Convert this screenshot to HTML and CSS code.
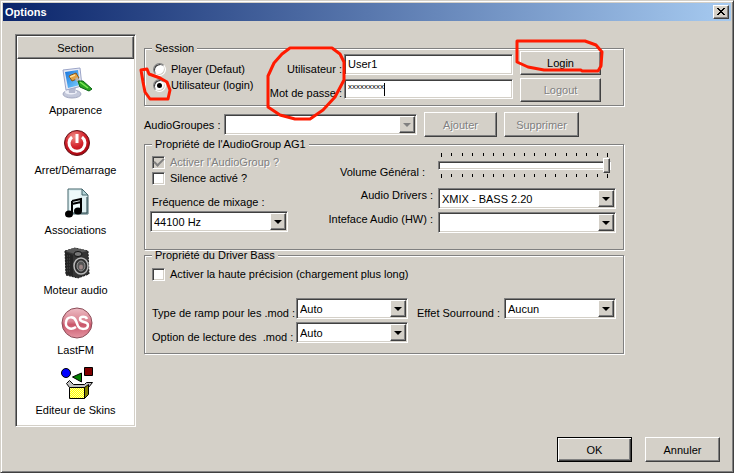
FILE: index.html
```html
<!DOCTYPE html>
<html lang="fr">
<head>
<meta charset="utf-8">
<title>Options</title>
<link rel="stylesheet" href="styles.css">
</head>
<body>
<div class="window">
  <header class="titlebar">
    <h1>Options</h1>
    <button class="close" type="button" aria-label="Fermer">
      <svg width="8" height="7" viewBox="0 0 8 7" shape-rendering="crispEdges"><path d="M0 0h2v1h1v1h2V1h1V0h2v1H7v1H6v1H5v1h1v1h1v1h1v1H6V6H5V5H3v1H2v1H0V6h1V5h1V4h1V3H2V2H1V1H0z"/></svg>
    </button>
  </header>

  <div class="content">
    <nav class="sidebar">
      <h2>Section</h2>
      <ul>
        <li><a href="#">
          <svg width="32" height="32" viewBox="0 0 32 32">
            <defs><linearGradient id="scr" x1="0" y1="0" x2="1" y2="1"><stop offset="0" stop-color="#1673dc"/><stop offset="1" stop-color="#7fd3ff"/></linearGradient></defs>
            <ellipse cx="11" cy="27" rx="9" ry="4" fill="#c3c8da" stroke="#a2a8c0"/>
            <ellipse cx="10" cy="25" rx="6" ry="2.500" fill="#eef0f8"/>
            <path d="M7 18l8 2-1 6H8z" fill="#b4b9ce"/>
            <path d="M2 3L19 1l2 18-16 4z" fill="#e6e9f4" stroke="#9ca5c8"/>
            <path d="M4 5l13-2 2 15-12 3z" fill="url(#scr)"/>
            <path d="M8 9l7-3 3 5-7 3z" fill="#e2a244" stroke="#8d5716"/><path d="M9 10l5-2" stroke="#ffe098" stroke-width="1.500"/>
            <path d="M15 11l4 5" stroke="#b4b4b4" stroke-width="3"/>
            <path d="M17 14l5 0 9 8-3 2-9-4z" fill="#28a321" stroke="#096513"/>
            <path d="M19 15l8 6" stroke="#7eea57" stroke-width="1.500"/>
          </svg>
          <span>Apparence</span></a></li>
        <li><a href="#">
          <svg width="32" height="32" viewBox="0 0 32 32">
            <defs><radialGradient id="pow" cx=".4" cy=".25" r=".8"><stop offset="0" stop-color="#f08c86"/><stop offset=".5" stop-color="#d3232c"/><stop offset="1" stop-color="#a3000b"/></radialGradient></defs>
            <circle cx="16" cy="16" r="12.500" fill="url(#pow)" stroke="#631016"/>
            <path d="M11 10a8 8 0 1 0 10 0" fill="none" stroke="#fff" stroke-width="3"/>
            <path d="M16 7v9" stroke="#fff" stroke-width="3"/>
          </svg>
          <span>Arret/Démarrage</span></a></li>
        <li><a href="#">
          <svg width="32" height="32" viewBox="0 0 32 32">
            <path d="M7 2h14l6 6v19H7z" fill="#dff0f2" stroke="#42656b"/>
            <path d="M9 4h10v21H9z" fill="#eefafa"/>
            <path d="M21 2v6h6z" fill="#b4d4d8" stroke="#42656b"/>
            <path d="M26 10v16H8" fill="none" stroke="#234047"/>
            <path d="M11 14l9-2v12M11 14v12M11 17l9-2" fill="none" stroke="#000" stroke-width="2"/>
            <ellipse cx="8" cy="27" rx="4" ry="3.500"/><ellipse cx="17" cy="24" rx="4" ry="3.500"/>
          </svg>
          <span>Associations</span></a></li>
        <li><a href="#">
          <svg width="32" height="32" viewBox="0 0 32 32">
            <path d="M4 4l10-3 13 3 1 23-11 4-12-3z" fill="#343434" stroke="#171717" stroke-dasharray="2 1"/>
            <path d="M4 4l10-3 13 3-13 3z" fill="#595959"/>
            <path d="M4 5l8 3v21l-7-2z" fill="#242424"/>
            <path d="M6 9h4M6 12h4M6 15h4M6 18h4M6 21h4M6 24h4" stroke="#4b4b4b" stroke-dasharray="1 1"/>
            <ellipse cx="17" cy="7" rx="4" ry="2.500" fill="#777" stroke="#111"/>
            <ellipse cx="20" cy="19" rx="7" ry="8" fill="#2c2c2c" stroke="#b8b8b8" stroke-width="1.500"/>
            <ellipse cx="20" cy="19" rx="4" ry="5" fill="#555" stroke="#999"/>
            <ellipse cx="20" cy="20" rx="2" ry="2.500" fill="#9b8585"/>
          </svg>
          <span>Moteur audio</span></a></li>
        <li><a href="#">
          <svg width="32" height="32" viewBox="0 0 32 32">
            <defs><linearGradient id="lfm" x1="0" y1="0" x2="0" y2="1"><stop offset="0" stop-color="#edbcc4"/><stop offset=".45" stop-color="#d9808f"/><stop offset=".55" stop-color="#ca576b"/><stop offset="1" stop-color="#e596a3"/></linearGradient></defs>
            <circle cx="16" cy="16" r="15" fill="url(#lfm)" stroke="#8b4c58"/>
            <path d="M15 20C9 24 4 20 5 15c1-6 8-6 10-1l2 5c2 4 10 4 10-1 0-4-8-2-8-6 0-3 6-3 7 0" fill="none" stroke="#fff" stroke-width="2.500"/>
          </svg>
          <span>LastFM</span></a></li>
        <li><a href="#">
          <svg width="32" height="32" viewBox="0 0 32 32">
            <defs><pattern id="dots" width="2" height="2" patternUnits="userSpaceOnUse"><path d="M0 0h2v2H0z" fill="#ff0"/><path d="M0 0h1v1H0zM1 1h1v1H1z" fill="#ffffa8"/></pattern></defs>
            <circle cx="5" cy="6" r="4.500" fill="#00f" stroke="#000"/>
            <path d="M11.500 10L20.500 6v9z" fill="#008000" stroke="#000"/>
            <path d="M23.500.5h8v8h-8z" fill="#800000" stroke="#000"/>
            <path d="M5.500 16.500l3-3 4 4h11l2-2h6l-4 5H8.500z" fill="#c0c0c0" stroke="#000"/>
            <path d="M8.500 20.500h15v11h-15z" fill="url(#dots)" stroke="#000"/>
            <path d="M23.500 20.500l4-3v10l-4 4z" fill="#808000" stroke="#000"/>
          </svg>
          <span>Editeur de Skins</span></a></li>
      </ul>
    </nav>

    <main class="main">
      <fieldset class="session">
        <legend>Session</legend>
        <div class="modes">
          <label class="option"><input type="radio" name="mode"> Player (Defaut)</label>
          <label class="option"><input type="radio" name="mode" checked> Utilisateur (login)</label>
        </div>
        <div class="credentials">
          <label for="user">Utilisateur :</label>
          <input class="field" id="user" type="text" value="User1">
          <label for="pass">Mot de passe :</label>
          <div class="secret">
            <input class="field" id="pass" type="text" value="xxxxxxxxx">
            <span class="caret"></span>
          </div>
        </div>
        <div class="session-actions">
          <button class="btn" type="button">Login</button>
          <button class="btn" type="button" disabled>Logout</button>
        </div>
      </fieldset>

      <div class="groups">
        <label for="groups">AudioGroupes :</label>
        <span class="combo"><select id="groups" disabled><option></option></select><span class="arrow"></span></span>
        <button class="btn" type="button" disabled>Ajouter</button>
        <button class="btn" type="button" disabled>Supprimer</button>
      </div>

      <fieldset class="group-props">
        <legend>Propriété de l'AudioGroup AG1</legend>
        <div class="mixing">
          <label class="option disabled"><input type="checkbox" checked disabled> Activer l'AudioGroup ?</label>
          <label class="option"><input type="checkbox"> Silence activé ?</label>
          <label class="caption" for="freq">Fréquence de mixage :</label>
          <span class="combo"><select id="freq"><option>44100 Hz</option></select><span class="arrow"></span></span>
        </div>
        <div class="output">
          <label class="volume-label" for="volume">Volume Général :</label>
          <div class="volume">
            <div class="ticks"><i></i><i></i><i></i><i></i><i></i><i></i><i></i><i></i><i></i><i></i><i></i><i></i><i></i><i></i><i></i><i></i><i></i></div>
            <input id="volume" type="range" min="0" max="100" value="100">
            <div class="ticks"><i></i><i></i><i></i><i></i><i></i><i></i><i></i><i></i><i></i><i></i><i></i><i></i><i></i><i></i><i></i><i></i><i></i></div>
          </div>
          <label for="driver">Audio Drivers :</label>
          <span class="combo"><select id="driver"><option>XMIX - BASS 2.20</option></select><span class="arrow"></span></span>
          <label for="hw">Inteface Audio (HW) :</label>
          <span class="combo"><select id="hw"><option></option></select><span class="arrow"></span></span>
        </div>
      </fieldset>

      <fieldset class="driver-props">
        <legend>Propriété du Driver Bass</legend>
        <label class="option"><input type="checkbox"> Activer la haute précision (chargement plus long)</label>
        <div class="driver-grid">
          <label for="ramp">Type de ramp pour les .mod :</label>
          <span class="combo"><select id="ramp"><option>Auto</option></select><span class="arrow"></span></span>
          <label class="surround" for="surround">Effet Sourround :</label>
          <span class="combo"><select id="surround"><option>Aucun</option></select><span class="arrow"></span></span>
          <label for="play">Option de lecture des  .mod :</label>
          <span class="combo"><select id="play"><option>Auto</option></select><span class="arrow"></span></span>
        </div>
      </fieldset>
    </main>
  </div>

  <footer class="footer">
    <button class="btn default" type="button">OK</button>
    <button class="btn" type="button">Annuler</button>
  </footer>

  <svg class="marks" width="734" height="473" viewBox="0 0 734 473">
    <path d="M141 70l6-1 2 5 11 4 7 4 3 8-2 9h-18l-5-7-2-10z"/>
    <path d="M290 48h42l8 6 4 8v18l-9 17-12 13-13 9h-15l-15-4-12-8V76l6-13 8-9z"/>
    <path d="M517 41h68l11 4 6 7-1 14-3 5h-16l-1-1h-37l-16-3-11-5z"/>
  </svg>
</div>
</body>
</html>
```
FILE: styles.css
```css
:root {
  --face: #d4d0c8;
  --shadow: #808080;
  --dark: #404040;
}

* { box-sizing: border-box; }

body {
  margin: 0;
  background: var(--face);
  color: #000;
  font: 11px/12px "Liberation Sans", Arial, sans-serif;
}

button, input, select { font: inherit; color: inherit; margin: 0; }

.window {
  position: relative;
  display: flex;
  flex-direction: column;
  min-height: 100vh;
  padding: 2px 1px 1px 2px;
  border: 1px solid;
  border-color: var(--face) var(--dark) var(--dark) var(--face);
  box-shadow: inset 1px 1px 0 #fff, inset -1px -1px 0 var(--shadow);
}

.titlebar {
  display: flex;
  align-items: center;
  justify-content: space-between;
  height: 18px;
  padding: 0 2px;
  margin-right: 1px;
  background: linear-gradient(to right, #0a246a, #a6caf0);
}

.titlebar h1 {
  margin: 0;
  color: #fff;
  font-size: 11px;
  line-height: 18px;
}

.close, .btn, .arrow {
  background: var(--face);
  border: 1px solid;
  border-color: #fff var(--dark) var(--dark) #fff;
  box-shadow: inset -1px -1px 0 var(--shadow);
}

.close {
  display: flex;
  align-items: center;
  justify-content: center;
  width: 16px;
  height: 14px;
  padding: 0 1px 1px 0;
}

.content {
  display: flex;
  flex: 1;
  align-items: flex-start;
  gap: 8px;
  padding: 13px 12px 0;
}

.sidebar {
  flex: none;
  width: 121px;
  padding-bottom: 8px;
  background: #fff;
  border: 1px solid;
  border-color: var(--shadow) #fff #fff var(--shadow);
  box-shadow: inset 1px 1px 0 var(--dark), inset -1px -1px 0 var(--face);
}

.sidebar h2 {
  height: 23px;
  margin: 1px 1px 8px;
  background: var(--face);
  border: 1px solid;
  border-color: #fff var(--dark) var(--dark) #fff;
  box-shadow: inset -1px -1px 0 var(--shadow);
  font-size: 11px;
  font-weight: normal;
  line-height: 22px;
  text-align: center;
}

.sidebar ul {
  display: flex;
  flex-direction: column;
  gap: 9px;
  margin: 0;
  padding: 0;
  list-style: none;
}

.sidebar a {
  display: flex;
  flex-direction: column;
  align-items: center;
  gap: 3px;
  color: inherit;
  line-height: 16px;
  text-decoration: none;
}

.sidebar svg { margin-left: 3px; }

.main {
  flex: 1;
  min-width: 0;
  max-width: 480px;
  padding-top: 13px;
}

fieldset {
  min-width: 0;
  margin: 0;
  border: 1px solid var(--shadow);
  box-shadow: 1px 1px 0 #fff, inset 1px 1px 0 #fff;
}

/* Short legend box: it only masks the etched line, its text overflows it. */
legend {
  height: 3px;
  margin-left: 2px;
  padding: 0 3px;
  background: var(--face);
  line-height: 3px;
}

.btn {
  height: 25px;
  width: 75px;
  padding: 0;
}

.btn:disabled, .disabled {
  color: var(--shadow);
  text-shadow: 1px 1px 0 #fff;
}

.btn.default {
  border-color: #000;
  box-shadow: inset 1px 1px 0 #fff, inset -1px -1px 0 var(--dark), inset -2px -2px 0 var(--shadow);
}

.field, .combo {
  background: #fff;
  border: 1px solid;
  border-color: var(--shadow) #fff #fff var(--shadow);
  box-shadow: inset 1px 1px 0 var(--dark), inset -1px -1px 0 var(--face);
}

.field {
  width: 100%;
  height: 21px;
  padding: 0 3px 1px;
  outline: 0;
}

.combo {
  display: grid;
  grid-template-columns: 1fr 16px;
  height: 21px;
  padding: 1px;
}

.combo select {
  grid-area: 1 / 1 / 2 / 3;
  width: 100%;
  padding: 0 2px;
  appearance: none;
  background: none;
  border: 0;
  opacity: 1;
}

.arrow {
  grid-area: 1 / 2;
  display: grid;
  place-items: center;
  pointer-events: none;
}

.arrow::after {
  content: "";
  border: 4px solid transparent;
  border-top-color: #000;
  border-bottom: 0;
}

select:disabled + .arrow::after { border-top-color: var(--shadow); }

.option {
  display: flex;
  align-items: center;
  gap: 5px;
  height: 16px;
}

.option input {
  display: grid;
  place-items: center;
  width: 13px;
  height: 13px;
  appearance: none;
  background: #fff;
  border: 1px solid;
  border-color: var(--shadow) #fff #fff var(--shadow);
  box-shadow: inset 1px 1px 0 var(--dark), inset -1px -1px 0 var(--face);
}

.option input[type="radio"] { border-radius: 50%; }

.option input[type="radio"]:checked::after {
  content: "";
  width: 5px;
  height: 5px;
  background: #000;
  border-radius: 50%;
}

.option input:disabled { background: var(--face); }

.option input[type="checkbox"]:checked::after {
  content: "";
  width: 8px;
  height: 4px;
  margin-bottom: 3px;
  border: solid var(--shadow);
  border-width: 0 0 2px 2px;
  transform: rotate(-45deg);
}

.session {
  display: flex;
  align-items: flex-start;
  padding: 1px 22px 3px 8px;
}

.session legend { margin-left: -1px; }

.modes {
  flex: 1;
  padding-top: 10px;
}

.credentials {
  display: grid;
  grid-template-columns: auto 169px;
  gap: 4px 2px;
  align-items: end;
  padding-top: 3px;
  text-align: right;
}

.secret {
  display: grid;
  align-items: center;
}

.secret .field {
  grid-area: 1 / 1;
  height: 20px;
  font-size: 8px;
  padding-bottom: 6px;
}

.caret {
  grid-area: 1 / 1;
  width: 1px;
  height: 13px;
  margin-left: 40px;
  background: #000;
}

.session-actions {
  display: grid;
  gap: 3px;
  margin-left: 7px;
}

.session-actions .btn {
  width: 81px;
  height: 24px;
}

.groups {
  display: flex;
  align-items: center;
  gap: 7px;
  padding: 6px 0;
  margin-right: 45px;
}

.groups label { width: 73px; white-space: nowrap; }
.groups .combo { flex: 1; }
.groups .btn:first-of-type { width: 73px; }

.group-props {
  display: flex;
  justify-content: space-between;
  padding: 7px 7px 16px 5px;
}

.mixing { width: 138px; white-space: nowrap; }
.mixing .option { margin-left: 2px; }
.mixing .option:first-of-type { margin-top: 1px; }
.mixing .caption { display: block; margin: 10px 2px 3px; }

.output {
  display: grid;
  grid-template-columns: auto 178px;
  grid-template-rows: 32px 21px 21px;
  gap: 3px 5px;
  text-align: right;
}

.output label { padding-top: 1px; }
.output .volume-label { padding: 13px 8px 0 0; }

.ticks {
  display: flex;
  justify-content: space-between;
  height: 4px;
  padding: 0 8px 0 3px;
}

.ticks i { width: 1px; height: 3px; background: #000; }
.ticks i:first-child, .ticks i:last-child { height: 4px; }

.volume input {
  display: block;
  width: 173px;
  height: 17px;
  appearance: none;
  background: none;
}

.volume input::-webkit-slider-runnable-track {
  height: 9px;
  background: #fff;
  border: 1px solid;
  border-color: var(--shadow) #fff #fff var(--shadow);
  box-shadow: inset 1px 1px 0 var(--dark), inset -1px -1px 0 var(--face);
}

.volume input::-webkit-slider-thumb {
  width: 7px;
  height: 15px;
  margin-top: -4px;
  appearance: none;
  background: var(--face);
  border: 1px solid;
  border-color: #fff var(--dark) var(--dark) #fff;
  box-shadow: inset -1px -1px 0 var(--shadow);
}

.driver-props {
  margin-top: 4px;
  padding: 9px 7px 10px;
}

.driver-props legend { margin-left: 0; }

.driver-grid {
  display: grid;
  grid-template-columns: 144px 112px 1fr 112px;
  row-gap: 3px;
  align-items: end;
  margin-top: 16px;
}

.driver-grid label { white-space: pre; }

.surround {
  padding-right: 4px;
  text-align: right;
}

.footer {
  display: flex;
  justify-content: flex-end;
  gap: 13px;
  padding: 0 12px 9px;
}

/* Freehand highlights drawn over the dialog. */
.marks {
  position: absolute;
  top: -1px;
  left: -1px;
  pointer-events: none;
}

.marks path {
  fill: none;
  stroke: #ff1a00;
  stroke-width: 3;
  stroke-linejoin: round;
}
```
